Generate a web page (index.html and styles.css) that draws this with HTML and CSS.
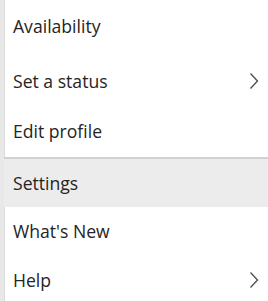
FILE: index.html
```html
<!DOCTYPE html>
<html lang="en">

<head>
    <meta charset="UTF-8">
    <meta name="viewport" content="width=device-width, initial-scale=1.0">
    <title>Profile menu</title>
    <link rel="stylesheet" href="styles.css">
</head>

<body>
    <div class="menu">
        <div class="item first">
            <span class="labl">Availability</span>
        </div>
        <div class="item">
            <span class="labl">Set a status</span>
            <svg class="chev" width="10" height="18" viewBox="0 0 10 18">
                <path d="M1.5 1.5 L8.5 9 L1.5 16.5" fill="none" stroke="#4a4a4a" stroke-width="1.3" />
            </svg>
        </div>
        <div class="item">
            <span class="labl">Edit profile</span>
        </div>
        <div class="divider"></div>
        <div class="item active">
            <span class="labl">Settings</span>
        </div>
        <div class="item short">
            <span class="labl">What's New</span>
        </div>
        <div class="item">
            <span class="labl">Help</span>
            <svg class="chev" width="10" height="18" viewBox="0 0 10 18">
                <path d="M1.5 1.5 L8.5 9 L1.5 16.5" fill="none" stroke="#4a4a4a" stroke-width="1.3" />
            </svg>
        </div>
    </div>
</body>

</html>
```

FILE: styles.css
```css
body {
    margin: 0;
    background-color: white;
    font-family: 'Open Sans', sans-serif;
    overflow: hidden;
}

.menu {
    display: flex;
    flex-direction: column;
    height: 301px;
    border-left: 4px solid #e8e8e8;
    box-shadow: inset 1px 0 0 #dcdcdc;
}

.item {
    display: flex;
    align-items: center;
    justify-content: space-between;
    flex-shrink: 0;
    height: 50px;
    padding: 0 9px 0 9px;
}

.item.first {
    height: 52px;
    margin-bottom: 4px;
}

.item.active {
    height: 48px;
    background-color: #ececec;
}

.item.short {
    height: 48px;
}

.labl {
    font-size: 17.6px;
    color: #242424;
}

.chev {
    display: block;
}

.divider {
    flex-shrink: 0;
    height: 2px;
    margin-top: 1px;
    background-color: #d1d1d1;
}
```
